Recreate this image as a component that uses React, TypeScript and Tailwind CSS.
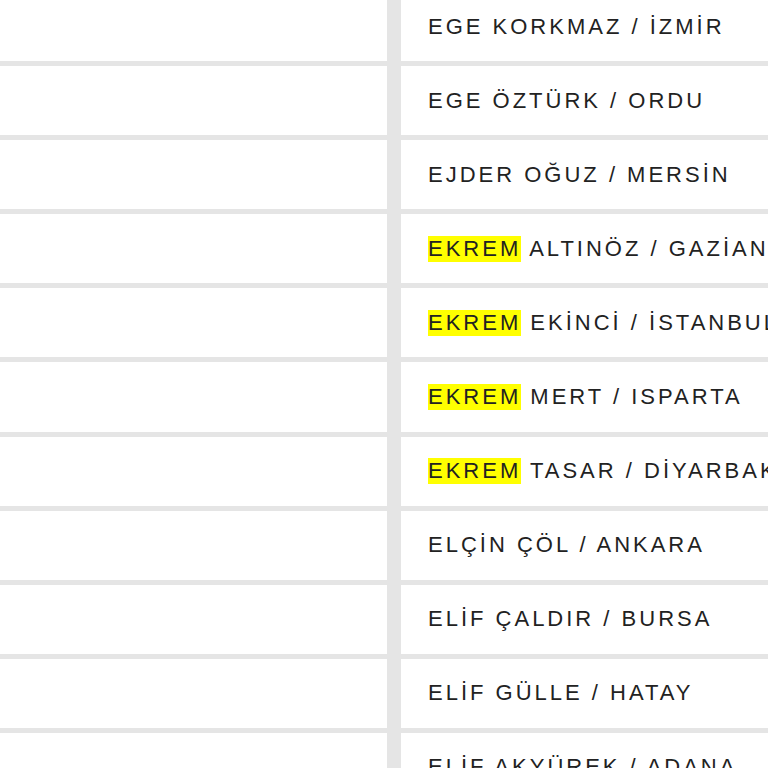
import React from "react";

const rows: { hl?: string; rest: string }[] = [
  { rest: "EGE KORKMAZ / İZMİR" },
  { rest: "EGE ÖZTÜRK / ORDU" },
  { rest: "EJDER OĞUZ / MERSİN" },
  { hl: "EKREM", rest: " ALTINÖZ / GAZİANTEP" },
  { hl: "EKREM", rest: " EKİNCİ / İSTANBUL" },
  { hl: "EKREM", rest: " MERT / ISPARTA" },
  { hl: "EKREM", rest: " TASAR / DİYARBAKIR" },
  { rest: "ELÇİN ÇÖL / ANKARA" },
  { rest: "ELİF ÇALDIR / BURSA" },
  { rest: "ELİF GÜLLE / HATAY" },
  { rest: "ELİF AKYÜREK / ADANA" },
];

export default function App() {
  return (
    <div
      className="h-[768px] w-[768px] overflow-hidden bg-[#e5e5e5]"
      style={{ fontFamily: '"Liberation Sans", Arial, sans-serif' }}
    >
      <div className="-mt-[8px] flex flex-col gap-[5px]">
        {rows.map((r, i) => (
          <div key={i} className="grid h-[69.1px] grid-cols-[387px_1fr] gap-x-[14px]">
            <div className="bg-white" />
            <div className="flex items-center overflow-hidden whitespace-nowrap bg-white pl-[27px] text-[22px] leading-[26px] tracking-[3px] text-[#222]">
              {r.hl && <span className="inline-block bg-[#ffff00] leading-[26px]">{r.hl}</span>}
              <span className="whitespace-pre">{r.rest}</span>
            </div>
          </div>
        ))}
      </div>
    </div>
  );
}
